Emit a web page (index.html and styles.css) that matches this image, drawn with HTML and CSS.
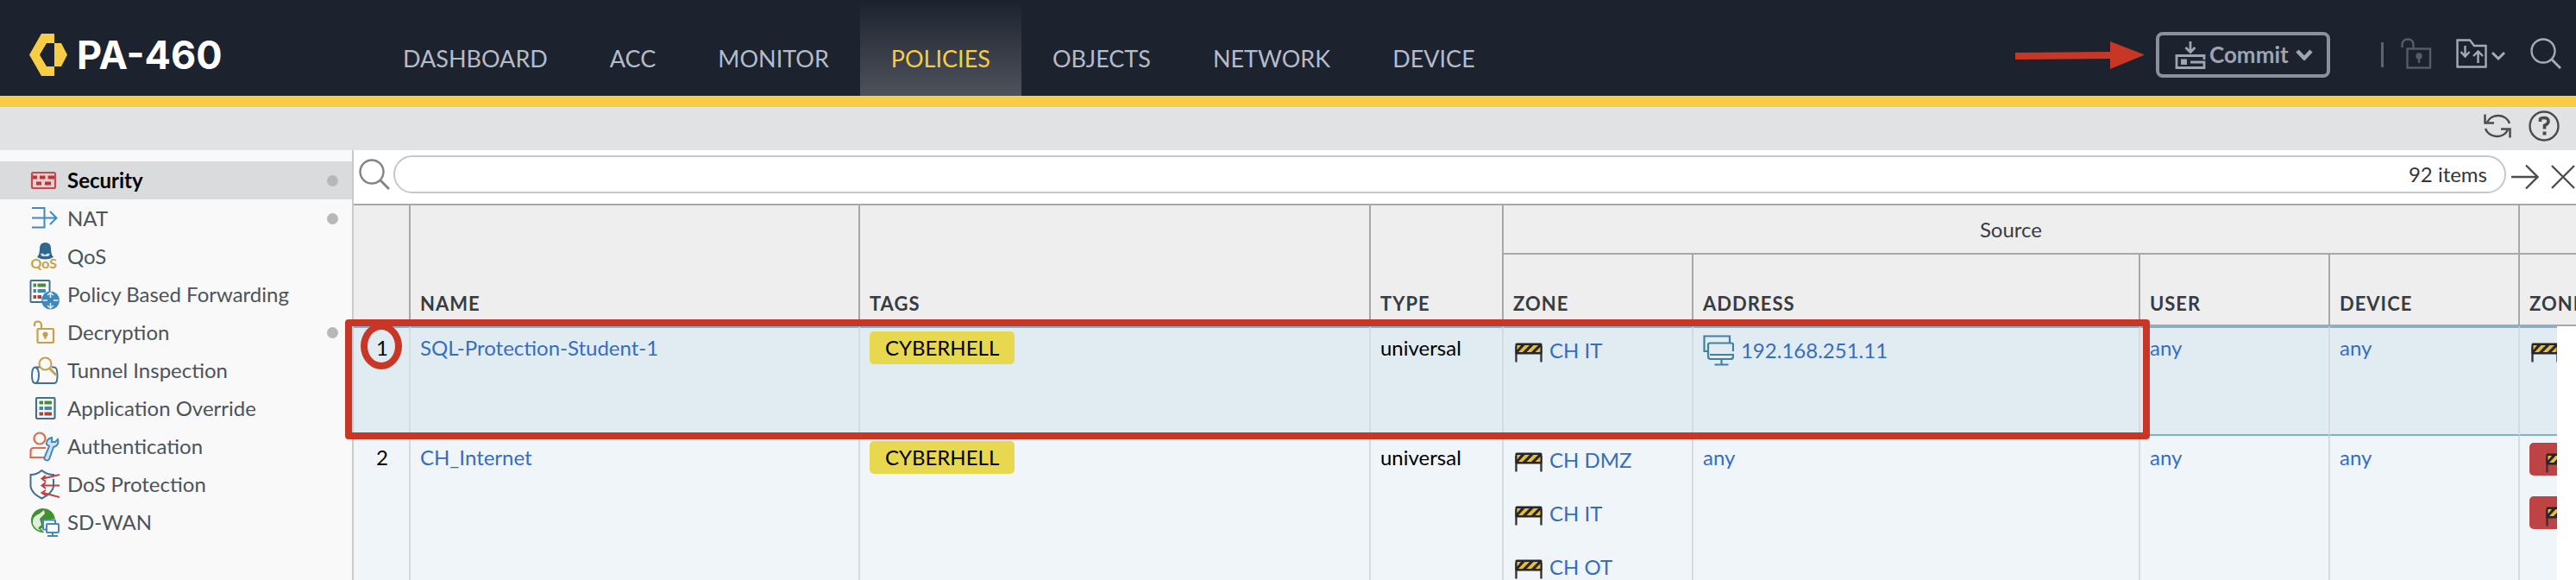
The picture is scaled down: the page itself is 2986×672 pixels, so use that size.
FILE: index.html
```html
<!DOCTYPE html>
<html lang="en">
<head>
<meta charset="utf-8">
<title>PA-460 Policies</title>
<link rel="stylesheet" href="styles.css">
</head>
<body>
<svg class="sprites" aria-hidden="true">
  <symbol id="barrier" viewBox="0 0 32 23">
    <path d="M1.5 22.5V4M30.5 22.5V4" stroke="#35353a" stroke-width="2.4" fill="none"/>
    <rect x="0.5" y="0.5" width="31" height="13" rx="1.5" fill="#26262a"/>
    <path d="M2.5 3H7L2.5 8.5ZM11.5 3H17L9 11H4ZM21.500 3H27L19 11H13.500ZM29.500 5V10.500L28 11H23.500Z" fill="#e3bd3c"/>
  </symbol>
  <symbol id="glass" viewBox="0 0 36 36">
    <circle cx="15" cy="15" r="13.500" fill="none" stroke="currentColor" stroke-width="2.4"/>
    <path d="M25 25L35 35" stroke="currentColor" stroke-width="3"/>
  </symbol>
</svg>

<header class="topbar">
  <a class="brand" href="#">
    <svg class="brand-mark" viewBox="0 0 44 49" aria-hidden="true">
      <path d="M14 0H29V11H20L12 24.500L20 38H29V49H14L0 24.500Z" fill="#f7cd46"/>
      <path d="M29 11H37L44 24.500L37 38H29Z" fill="#f7cd46"/>
    </svg>
    <span>PA-460</span>
  </a>
  <nav class="tabs" aria-label="Main">
    <a href="#">DASHBOARD</a>
    <a href="#">ACC</a>
    <a href="#">MONITOR</a>
    <a href="#" class="active" aria-current="page">POLICIES</a>
    <a href="#">OBJECTS</a>
    <a href="#">NETWORK</a>
    <a href="#">DEVICE</a>
  </nav>
  <div class="actions">
    <svg class="arrow-mark" viewBox="0 0 150 32" aria-hidden="true"><path d="M0 13L110 12V0L150 15.500L110 32V20L0 21Z" fill="#c83725"/></svg>
    <button class="commit" type="button">
      <svg class="commit-icon" viewBox="0 0 36 32" aria-hidden="true">
        <g fill="none" stroke="currentColor" stroke-width="2.800">
          <path d="M18 0V11M12.500 7L18 12.500L23.500 7"/>
          <path d="M34 21V16.500H2V30.500H34V24H18"/>
        </g>
        <rect x="7" y="20.500" width="7" height="6.500" fill="currentColor"/>
      </svg>
      <span>Commit</span>
      <svg class="commit-caret" viewBox="0 0 20 13" aria-hidden="true"><path d="M2 2L10 10.500L18 2" fill="none" stroke="currentColor" stroke-width="4.500"/></svg>
    </button>
    <span class="divider"></span>
    <button class="icon-button lock" type="button" aria-label="Locks">
      <svg viewBox="0 0 36 36" width="36" height="36" fill="none" stroke="currentColor" stroke-width="2.400"><path d="M1.500 11V8Q2 1.500 8 1.500Q14.500 1.500 14.500 8V12"/><rect x="7.500" y="12.500" width="26.500" height="22"/><circle cx="21" cy="21" r="2.500" fill="currentColor"/><path d="M21 22V29"/></svg>
    </button>
    <button class="icon-button folder" type="button" aria-label="Configuration">
      <svg viewBox="0 0 58 34" width="58" height="34" fill="none" stroke="currentColor" stroke-width="2.400"><path d="M1.500 1.500H16L21 8H34.500V32.500H1.500Z"/><path d="M10.500 8V20M5.500 15L10.500 20.500L15.500 15M25.500 28V15M20 20L25.500 14.500L31 20"/><path d="M42 16L49 23L56 16" stroke-width="3"/></svg>
    </button>
    <button class="icon-button find" type="button" aria-label="Search"><svg width="36" height="36"><use href="#glass"/></svg></button>
  </div>
</header>

<div class="toolbar">
  <button class="icon-button dark" type="button" aria-label="Refresh">
    <svg viewBox="0 0 32 32" width="32" height="32" fill="none" stroke="currentColor" stroke-width="2.500"><path d="M30 13A14 13 0 0 0 4 11.500M2 19A14 13 0 0 0 28 20.500"/><path d="M1.500 2.500V12.500H12M20 19.500H30.500V29.500"/></svg>
  </button>
  <button class="icon-button dark" type="button" aria-label="Help">
    <svg viewBox="0 0 36 36" width="36" height="36" fill="none" stroke="currentColor"><circle cx="18" cy="18" r="16.500" stroke-width="2.400"/><path d="M13.500 13V10Q14 8.500 18 8.500Q23 8.500 23 12.500Q23 15.500 18.500 17.500V21.500" stroke-width="3.600"/><path d="M18.500 24.500V28.500" stroke-width="4"/></svg>
  </button>
</div>

<div class="workspace">
  <nav class="sidebar" aria-label="Policies">
    <a href="#" class="selected"><svg viewBox="0 0 35 35"><rect x="3" y="8" width="27" height="18" rx="1.500" fill="#eecccc" stroke="#bb5054" stroke-width="2.200"/><path d="M4 13.500H9M12 13.500H18.500M21.500 13.500H29M8 20.500H14M18 20.500H25" stroke="#b23a3e" stroke-width="4"/></svg><span>Security</span><i class="dot"></i></a>
    <a href="#"><svg viewBox="0 0 35 35" fill="none" stroke="#4389bd" stroke-width="2"><path d="M3 5H17.500V27.500H3M3 16.500H31M24 9L31.500 16.500L24 24"/></svg><span>NAT</span><i class="dot"></i></a>
    <a href="#"><svg viewBox="0 0 35 35"><path d="M9 18Q12 15 12 8Q12 1 18.500 1Q25 1 25 8Q25 15 28 18Q18 23 9 18Z" fill="#2e6790"/><path d="M13 14.500Q15 12 18 15.500Q22 12 24 14.500L22 17H15Z" fill="#cfdfeb"/><text x="1.500" y="31" class="qos-mark">QoS</text></svg><span>QoS</span></a>
    <a href="#"><svg viewBox="0 0 35 35"><rect x="1.500" y="1" width="22" height="25" rx="1" fill="#fff" stroke="#42708c" stroke-width="2"/><path d="M4.500 6.500H8M9.500 6.500H19" stroke="#3e9334" stroke-width="4"/><path d="M4.500 13H8M9.500 13H19" stroke="#3d88c2" stroke-width="4"/><path d="M4.500 20H8M9.500 20H14" stroke="#b73a3e" stroke-width="4"/><circle cx="24.500" cy="24" r="10.500" fill="#4088bb"/><path d="M24.500 15V21M24.500 27V33M15.500 24H21M28 24H33.500M21 18L24.500 15L28 18M21 30L24.500 33L28 30" stroke="#e2eff8" stroke-width="1.600" fill="none"/></svg><span>Policy Based Forwarding</span></a>
    <a href="#"><svg viewBox="0 0 35 35" fill="none" stroke="#c7a04a" stroke-width="2.200"><path d="M6 10V8Q6 4.500 9.500 4.500Q14 4.500 14 9V13"/><rect x="9.500" y="13" width="18.500" height="16" rx="1"/><circle cx="18.500" cy="19.500" r="2" fill="#c7a04a"/><path d="M18.500 20V25"/></svg><span>Decryption</span><i class="dot"></i></a>
    <a href="#"><svg viewBox="0 0 35 35" fill="none" stroke="#3f7096" stroke-width="2"><path d="M12 13.500H7Q3 13.500 3 23Q3 32 7 32H29Q32.500 32 32.500 23Q32.500 13.500 29 13.500H26M7 13.500Q11 15 11 23Q11 31 7 32"/><circle cx="18.500" cy="9.500" r="7" stroke="#c7a04a" fill="#fafafa"/><path d="M23.500 15L31 22.500" stroke="#c7a04a" stroke-width="2.600"/></svg><span>Tunnel Inspection</span></a>
    <a href="#"><svg viewBox="0 0 35 35"><rect x="8" y="5" width="21.500" height="24" rx="1" fill="#fff" stroke="#42708c" stroke-width="2.200"/><path d="M11.500 10.500H16M17.500 10.500H26" stroke="#3e9334" stroke-width="4"/><path d="M11.500 17H16M17.500 17H26" stroke="#3d88c2" stroke-width="4"/><path d="M11.500 23.500H16M17.500 23.500H26" stroke="#b73a3e" stroke-width="4"/></svg><span>Application Override</span></a>
    <a href="#"><svg viewBox="0 0 35 35" fill="none" stroke="#df6c4b" stroke-width="2.200"><circle cx="12" cy="8" r="6.500"/><path d="M19 19H5Q1.500 19 1.500 23V30H17"/><path d="M20 15Q19 9 26 7L26 12L30 12L33 9Q35 16 28 18L23 32Q21 35 17.500 32Q17 31 18 29L23 17Z" fill="#cfe1f0" stroke="#4389bd" stroke-width="2"/></svg><span>Authentication</span></a>
    <a href="#"><svg viewBox="0 0 35 35" fill="none" stroke="#3f7096" stroke-width="2"><path d="M28 8V6Q20 6 14.500 1Q9 6 1.500 6V20Q3 28 14.500 33.500Q26 28 28 20V11"/><path d="M35 6L16 10.500M35 18.500H16M35 32L16 27M19 7L14.500 10.500L19 14M19 15L14.500 18.500L19 22M19 24L14.500 27L19 30" stroke="#b84347"/></svg><span>DoS Protection</span></a>
    <a href="#"><svg viewBox="0 0 35 35"><path d="M15 1A14 14 0 1 0 17 29L13 24H17V15L30 13Q27 1 15 1Z" fill="#42902f"/><path d="M4 19Q3 10 12 7L17 3L18 7L12 13L14 20L10 24L14 27Q7 26 4 19Z" fill="#dfeedd"/><g fill="#fff" stroke="#4389bd" stroke-width="2"><rect x="16" y="14.500" width="14" height="11" rx="1"/><rect x="20" y="19" width="14" height="10" rx="1"/><path d="M27 29V33M21 33H33"/></g></svg><span>SD-WAN</span></a>
  </nav>

  <main class="content">
    <form class="filter">
      <svg class="filter-glass" aria-hidden="true"><use href="#glass"/></svg>
      <label class="filter-box">
        <input type="text" aria-label="Filter policies">
        <span>92 items</span>
      </label>
      <button class="icon-button dark" type="button" aria-label="Apply filter"><svg viewBox="0 0 32 30" width="32" height="30" fill="none" stroke="currentColor" stroke-width="2.300"><path d="M0 15H30M17 1.500L30.500 15L17 28.500"/></svg></button>
      <button class="icon-button dark" type="button" aria-label="Clear filter"><svg viewBox="0 0 28 28" width="28" height="28" stroke="currentColor" stroke-width="2.300"><path d="M1 1L27 27M27 1L1 27"/></svg></button>
    </form>

    <div class="grid">
      <table>
        <colgroup>
          <col class="c-num"><col><col class="c-tags"><col class="c-type"><col class="c-mid"><col class="c-address"><col class="c-mid"><col class="c-mid"><col class="c-last"><col class="c-gutter">
        </colgroup>
        <thead>
          <tr class="groups">
            <th rowspan="2"></th>
            <th rowspan="2">NAME</th>
            <th rowspan="2">TAGS</th>
            <th rowspan="2">TYPE</th>
            <th colspan="4" class="group">Source</th>
            <th colspan="2" class="group open"></th>
          </tr>
          <tr class="labels">
            <th>ZONE</th><th>ADDRESS</th><th>USER</th><th>DEVICE</th><th colspan="2" class="open">ZONE</th>
          </tr>
        </thead>
        <tbody>
          <tr class="current">
            <td class="num">1<i class="ring"></i></td>
            <td><a href="#">SQL-Protection-Student-1</a></td>
            <td><span class="tag">CYBERHELL</span></td>
            <td>universal</td>
            <td><a href="#" class="item"><svg><use href="#barrier"/></svg>CH IT</a></td>
            <td><a href="#" class="item host"><svg viewBox="0 0 36 36" fill="none" stroke="#457f9f" stroke-width="2.200"><path d="M5 19H1.500V1.500H31V9"/><path d="M35 19V11Q35 9.500 33 9.500H8Q6 9.500 6 11.500V25Q6 28 9 28H32Q35 28 35 25V23H8M21.500 28V34M13.500 34.500H29.500"/></svg>192.168.251.11</a></td>
            <td><a href="#">any</a></td>
            <td><a href="#">any</a></td>
            <td class="open"><a href="#" class="item"><svg><use href="#barrier"/></svg></a></td>
            <td class="gutter"></td>
          </tr>
          <tr>
            <td class="num">2</td>
            <td><a href="#">CH_Internet</a></td>
            <td><span class="tag">CYBERHELL</span></td>
            <td>universal</td>
            <td><a href="#" class="item"><svg><use href="#barrier"/></svg>CH DMZ</a><a href="#" class="item"><svg><use href="#barrier"/></svg>CH IT</a><a href="#" class="item"><svg><use href="#barrier"/></svg>CH OT</a></td>
            <td><a href="#">any</a></td>
            <td><a href="#">any</a></td>
            <td><a href="#">any</a></td>
            <td class="open"><a href="#" class="chip"><svg><use href="#barrier"/></svg></a><a href="#" class="chip"><svg><use href="#barrier"/></svg></a></td>
            <td class="gutter"></td>
          </tr>
        </tbody>
      </table>
      <div class="outline"></div>
    </div>
  </main>
</div>
</body>
</html>
```

FILE: styles.css
```css
* { box-sizing: border-box; }

html, body { height: 100%; }

body {
  margin: 0;
  display: flex;
  flex-direction: column;
  overflow: hidden;
  background: #fff;
  color: #000;
  font-family: Lato, "Open Sans", sans-serif;
  font-size: 24px;
  line-height: 32px;
}

a { color: inherit; text-decoration: none; }
button { padding: 0; border: 0; background: none; font: inherit; }
svg { display: block; flex: none; }
.sprites { position: absolute; width: 0; height: 0; }

/* Top bar */
.topbar {
  display: flex;
  flex: none;
  height: 124px;
  border-bottom: 13px solid #f7cd46;
  background: #1c222e;
}

.brand {
  display: flex;
  align-items: center;
  gap: 11px;
  width: 431px;
  padding: 16px 0 0 34px;
  color: #fff;
  font: 700 45px/48px Inter, sans-serif;
}
.brand-mark { width: 44px; height: 49px; }

.tabs { display: flex; }
.tabs a {
  padding: 52px 36px 0;
  color: #b4bbc9;
  font-size: 27px;
}
.tabs .active {
  background: linear-gradient(#1c222e, #4e525b);
  color: #f7cd46;
}

.actions {
  display: flex;
  align-items: center;
  margin-left: auto;
  padding: 16px 17px 0 0;
  color: #a5abb8;
}
.arrow-mark { width: 150px; height: 32px; margin-right: 13px; }

.commit {
  display: flex;
  align-items: center;
  width: 202px;
  height: 53px;
  padding-left: 18px;
  border: 4px solid #8b909d;
  border-radius: 8px;
  color: #9ea4b1;
  font-size: 26px;
  font-weight: 700;
}
.commit-icon { width: 36px; height: 32px; }
.commit span { margin: 0 8px 2px 4px; }
.commit-caret { width: 20px; height: 13px; }

.divider { width: 3px; height: 29px; margin: 0 20px 0 59px; background: #5d6371; }
.icon-button { color: inherit; }
.lock { margin-right: 28px; color: #555c6a; }
.folder { margin-right: 28px; }
.topbar .find, .topbar .folder, .topbar .lock { margin-bottom: 4px; }
.dark { color: #4a4b4e; }

/* Toolbar */
.toolbar {
  display: flex;
  flex: none;
  align-items: center;
  justify-content: flex-end;
  gap: 20px;
  height: 50px;
  padding: 0 19px 6px 0;
  background: #e1e2e4;
}

/* Sidebar */
.workspace { display: flex; flex: 1; min-height: 0; }

.sidebar {
  flex: none;
  width: 410px;
  padding-top: 13px;
  border-right: 2px solid #c8cacd;
  background: #f9f9f9;
  color: #4d535a;
}
.sidebar a {
  display: flex;
  align-items: center;
  gap: 9px;
  height: 44px;
  padding: 0 16px 0 34px;
}
.sidebar svg { width: 35px; height: 35px; }
.sidebar .selected { background: #dadbdd; color: #000; font-weight: 700; }
.qos-mark { fill: #c99f45; font: 700 16px Lato, sans-serif; }
.dot { width: 13px; height: 13px; margin-left: auto; border-radius: 50%; background: #b8b8b8; }

/* Filter */
.content { display: flex; flex: 1; flex-direction: column; min-width: 0; }

.filter {
  display: flex;
  flex: none;
  align-items: center;
  height: 62px;
  padding: 0 0 6px 6px;
}
.filter-glass { width: 36px; height: 36px; color: #818488; }
.filter-box {
  display: flex;
  flex: 1;
  align-items: center;
  height: 44px;
  margin: 0 6px 0 4px;
  padding: 0 20px;
  border: 2px solid #c6c7c9;
  border-radius: 22px;
  color: #33363a;
}
.filter-box input {
  flex: 1;
  min-width: 0;
  border: 0;
  outline: 0;
  background: none;
  font: inherit;
}
.filter .icon-button { margin: 6px 14px 0 0; }
.filter .icon-button:last-child { margin-right: 1px; }

/* Policy grid */
.grid { position: relative; border-top: 2px solid #a6a8ac; }

table { width: 100%; table-layout: fixed; border-collapse: separate; border-spacing: 0; }
.c-num { width: 66px; }
.c-tags { width: 592px; }
.c-type { width: 154px; }
.c-mid { width: 220px; }
.c-address { width: 518px; }
.c-last { width: 43px; }
.c-gutter { width: 22px; }

th {
  padding: 0 11px 8px;
  border-right: 2px solid #a6a8ac;
  border-bottom: 2px solid #a6a8ac;
  background: #eee;
  color: #383c42;
  font-size: 22px;
  font-weight: 700;
  letter-spacing: 1px;
  text-align: left;
  vertical-align: bottom;
  overflow: hidden;
}
.groups { height: 57px; }
.labels { height: 83px; }
th.group {
  padding: 0;
  font-size: 24px;
  font-weight: 400;
  letter-spacing: normal;
  text-align: center;
  vertical-align: middle;
}
th.open, td.open { border-right: 0; }

td {
  height: 185px;
  padding: 6px 11px 0;
  border-right: 2px solid #d8dbde;
  background: #eff5f8;
  line-height: 38px;
  vertical-align: top;
  overflow: hidden;
}
.current td {
  height: 127px;
  padding-top: 4px;
  border-top: 2px solid #7fb1d0;
  border-bottom: 2px solid #7fb1d0;
  background: #e1ecf2;
}
td a { color: #366dc1; }
td.num { position: relative; padding-right: 0; padding-left: 2px; text-align: center; overflow: visible; }
td.gutter, .current td.gutter { padding: 0; border: 0; background: #fff; }

.tag {
  display: block;
  width: max-content;
  padding: 0 18px;
  border-radius: 5px;
  background: #e8d84f;
}
.item { display: flex; align-items: center; gap: 8px; height: 44px; margin-bottom: 18px; }
.item svg { width: 32px; height: 23px; margin: 4px 0 0 2px; }
.host svg { width: 36px; height: 36px; margin: 0; }
.chip {
  display: flex;
  width: 160px;
  height: 38px;
  margin: 2px 0 24px;
  padding: 12px 0 0 19px;
  border-radius: 5px;
  background: #bd4345;
}
.chip svg { width: 32px; height: 23px; }

/* Highlights drawn over the first rule */
.outline {
  position: absolute;
  top: 132px;
  left: -10px;
  width: 2092px;
  height: 139px;
  border: 8px solid #c83725;
  border-radius: 4px;
}
.ring {
  position: absolute;
  top: -6px;
  left: 8px;
  width: 48px;
  height: 54px;
  border: 8px solid #c83725;
  border-radius: 50%;
}
```
